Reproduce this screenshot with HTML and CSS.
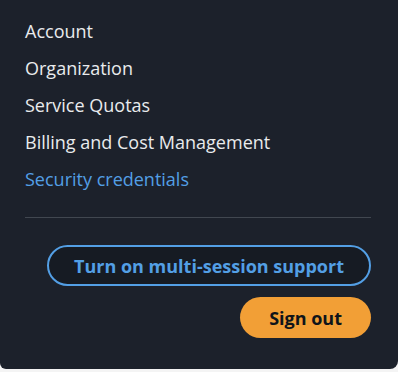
FILE: index.html
```html
<!DOCTYPE html>
<html lang="en">
<head>
    <meta charset="UTF-8">
    <meta name="viewport" content="width=device-width, initial-scale=1.0">
    <title>Account menu</title>
    <link rel="stylesheet" href="styles.css">
</head>
<body>
    <div class="menu">
        <ul class="menu-links">
            <li><a href="#">Account</a></li>
            <li><a href="#">Organization</a></li>
            <li><a href="#">Service Quotas</a></li>
            <li><a href="#">Billing and Cost Management</a></li>
            <li><a href="#" class="active">Security credentials</a></li>
        </ul>
        <hr class="divider">
        <div class="menu-actions">
            <button class="btn btn-outline">Turn on multi-session support</button>
            <button class="btn btn-primary">Sign out</button>
        </div>
    </div>
</body>
</html>
```

FILE: styles.css
```css
body {
    margin: 0;
    padding: 0;
    background-color: #f4f4f4;
    font-family: 'Open Sans', 'Noto Sans', sans-serif;
}
.menu {
    background-color: #1c212b;
    border-radius: 0 0 8px 6px;
    padding: 19px 27px 31px 25px;
}
.menu-links {
    list-style: none;
    margin: 0;
    padding: 0;
    display: flex;
    flex-direction: column;
    gap: 13px;
}
.menu-links a {
    display: block;
    color: #e9ebed;
    text-decoration: none;
    font-size: 18px;
    font-weight: 500;
    line-height: 24px;
}
.menu-links a.active {
    color: #539fe5;
}
.divider {
    border: none;
    border-top: 1px solid #414750;
    margin: 26px 0 0 0;
}
.menu-actions {
    display: flex;
    flex-direction: column;
    align-items: flex-end;
    gap: 11px;
    margin-top: 27px;
}
.btn {
    font-family: 'Open Sans', 'Noto Sans', sans-serif;
    font-size: 18px;
    font-weight: 700;
    border-radius: 21px;
    height: 41px;
    cursor: pointer;
}
.btn-outline {
    background-color: #161b23;
    color: #539fe5;
    border: 2px solid #539fe5;
    padding: 0 25px;
}
.btn-primary {
    background-color: #f29f36;
    color: #0f141a;
    border: none;
    padding: 0 29px;
}
```
